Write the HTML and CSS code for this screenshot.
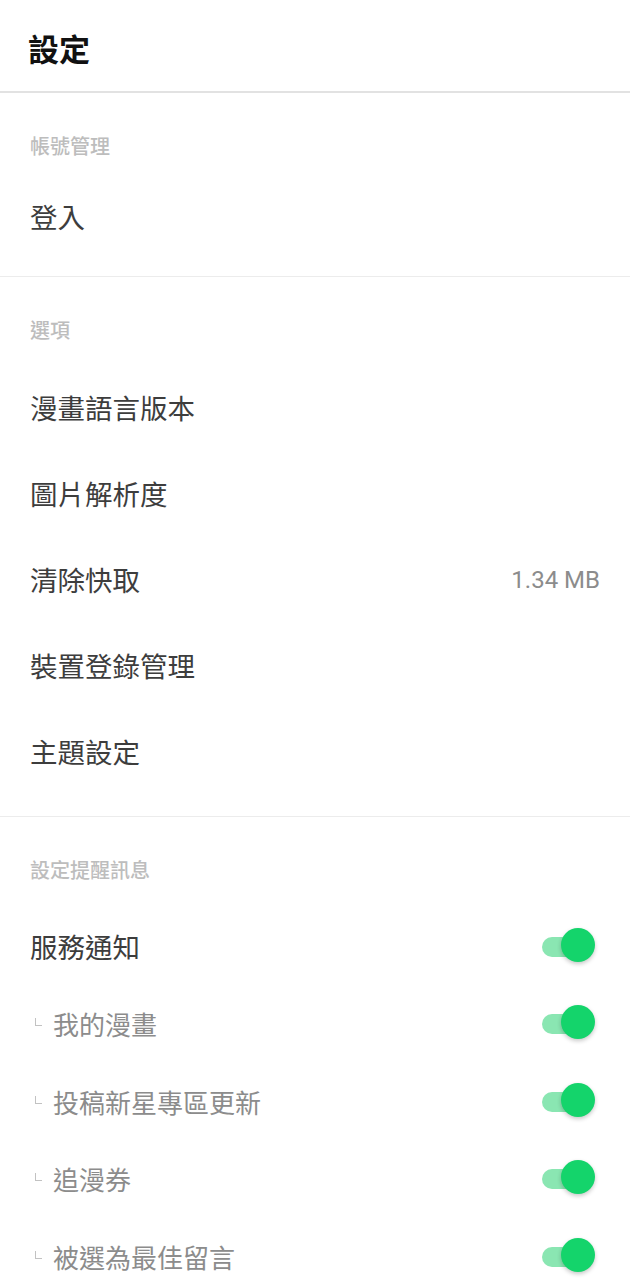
FILE: index.html
```html
<!DOCTYPE html>
<html lang="zh-Hant">
<head>
    <meta charset="UTF-8">
    <meta name="viewport" content="width=device-width, initial-scale=1.0">
    <title>設定</title>
    <link rel="stylesheet" href="styles.css">
</head>
<body>

    <header class="top-bar">
        <h1 class="title">設定</h1>
    </header>

    <section class="group">
        <div class="group-label">帳號管理</div>
        <div class="row">登入</div>
    </section>

    <section class="group group-options">
        <div class="group-label">選項</div>
        <div class="row">漫畫語言版本</div>
        <div class="row">圖片解析度</div>
        <div class="row">
            <span>清除快取</span>
            <span class="row-value">1.34 MB</span>
        </div>
        <div class="row">裝置登錄管理</div>
        <div class="row">主題設定</div>
    </section>

    <section class="group group-alerts">
        <div class="group-label">設定提醒訊息</div>
        <div class="row row-toggle">
            <span>服務通知</span>
            <span class="switch"><span class="track"></span><span class="knob"></span></span>
        </div>
        <div class="row row-toggle row-sub">
            <span><i class="sub-mark"></i>我的漫畫</span>
            <span class="switch"><span class="track"></span><span class="knob"></span></span>
        </div>
        <div class="row row-toggle row-sub">
            <span><i class="sub-mark"></i>投稿新星專區更新</span>
            <span class="switch"><span class="track"></span><span class="knob"></span></span>
        </div>
        <div class="row row-toggle row-sub">
            <span><i class="sub-mark"></i>追漫券</span>
            <span class="switch"><span class="track"></span><span class="knob"></span></span>
        </div>
        <div class="row row-toggle row-sub">
            <span><i class="sub-mark"></i>被選為最佳留言</span>
            <span class="switch"><span class="track"></span><span class="knob"></span></span>
        </div>
    </section>

</body>
</html>
```

FILE: styles.css
```css
*, *::after, *::before{
    margin: 0;
    padding: 0;
    box-sizing: border-box;
}
:root {
    --txt-cl: #3d3d3d;
    --sub-cl: #8c8c8c;
    --lbl-cl: #bdbdbd;
    --on-cl: #14d46b;
    --track-cl: #8ae6b2;
}

body{
    background-color: #fff;
    font-family: "Noto Sans CJK TC", "Noto Sans", sans-serif;
    color: var(--txt-cl);
    height: 1280px;
    overflow: hidden;
}

.top-bar{
    height: 93px;
    display: flex;
    align-items: center;
    padding: 3px 28px 0 28px;
    border-bottom: 2px solid #e2e2e2;
}
.title{
    font-size: 31px;
    font-weight: 700;
    color: #111;
    line-height: 1;
}

.group{
    border-bottom: 1px solid #ececec;
    padding-bottom: 16px;
}
.group-options{
    padding-bottom: 21px;
}
.group-alerts{
    border-bottom: none;
}
.group-label{
    padding: 39px 30px 0 30px;
    line-height: 27px;
    font-size: 20px;
    font-weight: 500;
    color: var(--lbl-cl);
    margin-bottom: 15px;
}
.group-options .group-label{
    margin-bottom: 22px;
}
.group-alerts .group-label{
    margin-bottom: 25px;
}

.row{
    height: 86px;
    display: flex;
    align-items: center;
    justify-content: space-between;
    padding: 0 30px;
    font-size: 27.5px;
    line-height: 1;
}
.row-value{
    font-family: Roboto, "Liberation Sans", sans-serif;
    font-size: 24px;
    color: var(--sub-cl);
}

.row-toggle{
    height: 77.5px;
    padding-right: 35px;
}
.row-sub{
    font-size: 26px;
    color: var(--sub-cl);
}
.sub-mark{
    display: inline-block;
    width: 7px;
    height: 8px;
    border-left: 1.5px solid #c2c2c2;
    border-bottom: 1.5px solid #c2c2c2;
    margin: 0 11px 0 5px;
    vertical-align: 9px;
}

.switch{
    position: relative;
    width: 53px;
    height: 34px;
    display: block;
}
.track{
    display: block;
    width: 47px;
    height: 20px;
    margin-top: 7px;
    border-radius: 10px;
    background-color: var(--track-cl);
}
.knob{
    position: absolute;
    right: 0;
    top: -2px;
    width: 34px;
    height: 34px;
    border-radius: 50%;
    background-color: var(--on-cl);
    box-shadow: 0 2px 4px rgba(0, 0, 0, 0.22);
}
```
